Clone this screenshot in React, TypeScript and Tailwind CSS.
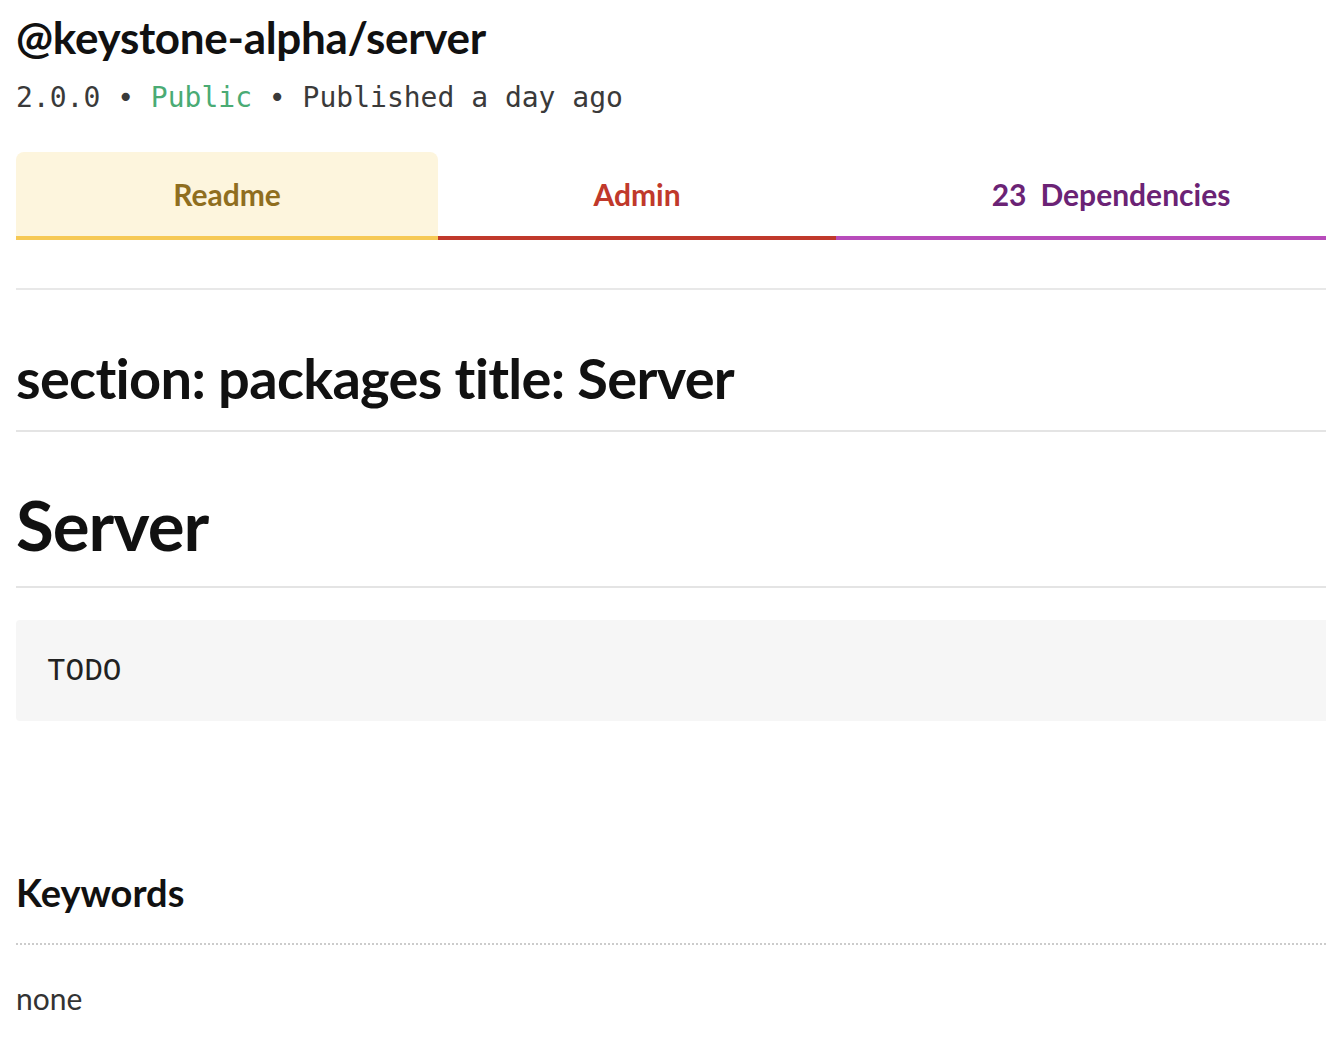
import React from 'react';

const sans = "font-['Lato','Noto_Sans',sans-serif]";
const mono = "font-['DejaVu_Sans_Mono','Liberation_Mono',monospace]";

type Tab = { label: React.ReactNode; width: string; cls: string };

const tabs: Tab[] = [
    { label: 'Readme', width: 'w-[422px]', cls: 'bg-[#fdf5dd] text-[#8f6e1f] border-[#f6c955] rounded-t-lg' },
    { label: 'Admin', width: 'w-[398px]', cls: 'text-[#c0392b] border-[#c0392b]' },
    {
        label: (
            <>
                <span>23</span>
                <span className="ml-[14px]">Dependencies</span>
            </>
        ),
        width: 'flex-1',
        cls: 'text-[#6b2375] border-[#b84cbb]',
    },
];

export default function App() {
    return (
        <div className={`min-h-screen overflow-hidden bg-white pl-4 ${sans}`}>
            {/* the page is wider than the window; content runs past the right edge */}
            <div className="w-[1370px]">
                <h2 className="mt-[9px] text-[44px] leading-[56px] font-bold tracking-[-0.3px] text-[#111]">@keystone-alpha/server</h2>
                <p className={`mt-[13px] text-[28px] leading-[40px] text-[#3a3a3a] ${mono}`}>
                    2.0.0 • <span className="text-[#4aab74]">Public</span> • Published a day ago
                </p>

                <nav className="mt-[34px] flex h-[88px]">
                    {tabs.map((t, i) => (
                        <div
                            key={i}
                            className={`flex items-center justify-center border-b-4 text-[30px] font-bold ${t.width} ${t.cls}`}
                        >
                            {t.label}
                        </div>
                    ))}
                </nav>

                <div className="mt-[48px] h-[2px] bg-[#e8e8e8]" />

                <h1 className="mt-[56px] border-b-2 border-[#e4e4e4] pb-[20px] text-[56px] leading-[64px] font-bold tracking-[-0.7px] text-[#111]">
                    section: packages title: Server
                </h1>

                <h1 className="mt-[48px] border-b-2 border-[#e4e4e4] pb-[16px] text-[69px] leading-[90px] font-bold tracking-[-1px] text-[#111]">
                    Server
                </h1>

                <pre className="mt-[32px] rounded bg-[#f6f6f6] pt-[32px] pb-[29px] pl-[31px] font-['Liberation_Mono',monospace] text-[31px] leading-[40px] text-[#222]">
                    TODO
                </pre>

                <h3 className="mt-[147px] border-b-2 border-dotted border-[#cccccc] pb-[27px] text-[38px] leading-[48px] font-bold text-[#111]">
                    Keywords
                </h3>
                <p className="mt-[33px] text-[30px] leading-[40px] text-[#333]">none</p>
            </div>
        </div>
    );
}
